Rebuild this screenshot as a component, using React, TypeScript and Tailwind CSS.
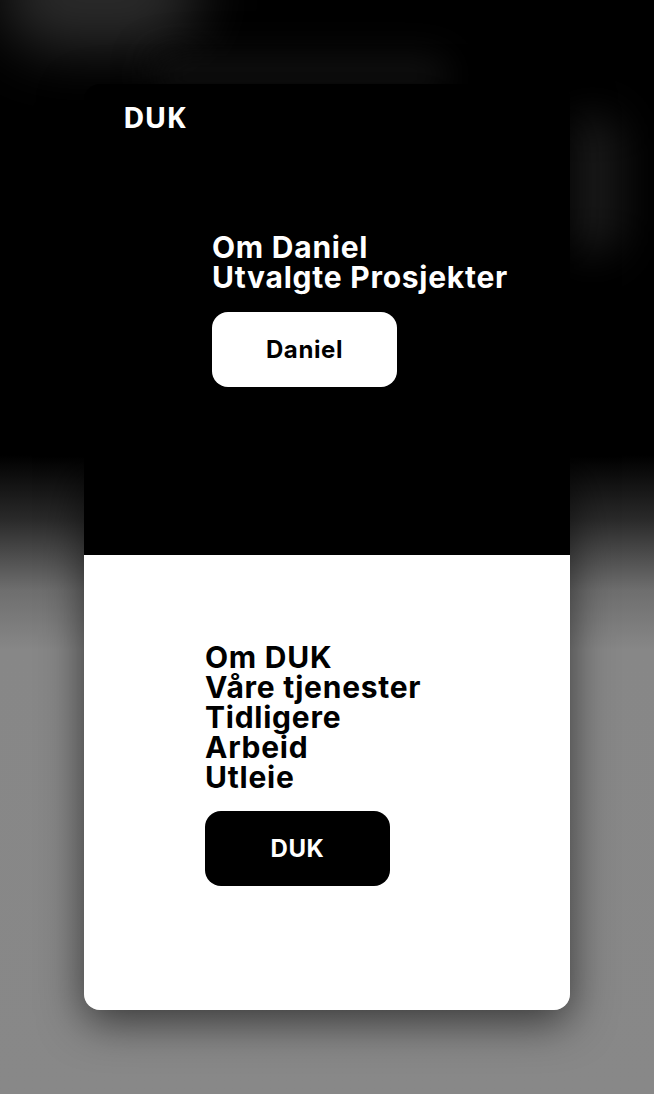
import React from "react";

const heading = "font-['Inter',sans-serif] font-bold text-[30px] leading-[30px] tracking-[0.75px]";

function App() {
    return (
        <div className="relative min-h-[1094px] w-full overflow-hidden bg-[linear-gradient(to_bottom,#000_0px,#000_455px,#2a2a2a_520px,#6e6e6e_590px,#878787_650px,#888_1094px)] pt-[84px] pb-[84px]">
            {/* soft glows behind the card */}
            <div className="pointer-events-none absolute left-[0px] top-[-60px] h-[110px] w-[200px] rounded-full bg-[#2a2a2a] blur-[30px]" />
            <div className="pointer-events-none absolute left-[150px] top-[55px] h-[40px] w-[300px] rounded-full bg-[#121212] blur-[18px]" />
            <div className="pointer-events-none absolute left-[565px] top-[115px] h-[140px] w-[55px] rounded-full bg-[#1c1c1c] blur-[22px]" />

            <div className="relative mx-auto w-[486px] overflow-hidden rounded-[16px] shadow-[0_12px_44px_rgba(0,0,0,0.6)]">
                <section className="h-[471px] bg-black">
                    <div className="pl-[39px] pt-[16px] font-['Open_Sans',sans-serif] text-[29px] leading-[34px] font-bold text-white">
                        DUK
                    </div>
                    <div className="pl-[128px] pt-[98px]">
                        <h2 className={`${heading} text-white`}>
                            Om Daniel
                            <br />
                            Utvalgte Prosjekter
                        </h2>
                        <button
                            type="button"
                            className="mt-[20px] flex h-[75px] w-[185px] items-center justify-center rounded-[16px] bg-white font-['Inter',sans-serif] text-[24px] font-bold tracking-[0.6px] text-black"
                        >
                            Daniel
                        </button>
                    </div>
                </section>
                <section className="h-[455px] bg-white pl-[121px] pt-[87px]">
                    <h2 className={`${heading} text-black`}>
                        Om DUK
                        <br />
                        Våre tjenester
                        <br />
                        Tidligere
                        <br />
                        Arbeid
                        <br />
                        Utleie
                    </h2>
                    <button
                        type="button"
                        className="mt-[19px] flex h-[75px] w-[185px] items-center justify-center rounded-[16px] bg-black font-['Inter',sans-serif] text-[24px] font-bold tracking-[0.6px] text-white"
                    >
                        DUK
                    </button>
                </section>
            </div>
        </div>
    );
}

export default App;
